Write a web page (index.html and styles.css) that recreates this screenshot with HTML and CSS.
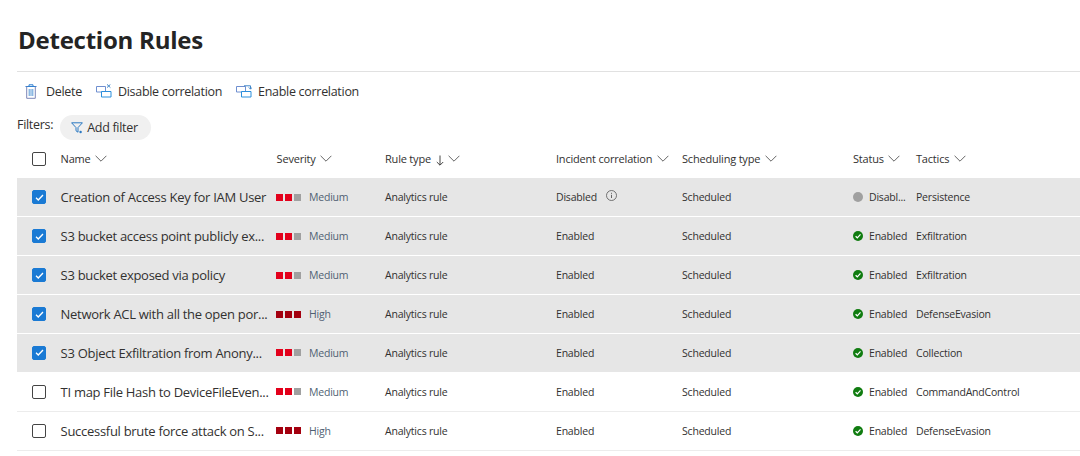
FILE: index.html
```html
<!DOCTYPE html>
<html lang="en">
<head>
  <meta charset="UTF-8" />
  <title>Detection Rules</title>
  <link rel="stylesheet" href="styles.css">
</head>
<body>
  <svg class="sprites" width="0" height="0" aria-hidden="true">
    <symbol id="chev" viewBox="0 0 12 7"><path d="M.6.8 6 6.2 11.4.8" fill="none" stroke="currentColor" stroke-width=".9"/></symbol>
    <symbol id="check" viewBox="0 0 10 8"><path d="M1 4.2 3.6 6.8 9 1.2" fill="none" stroke="#fff" stroke-width="1.6"/></symbol>
    <symbol id="ok" viewBox="0 0 10 10"><circle cx="5" cy="5" r="5" fill="#107c10"/><path d="M2.6 5.2 4.3 6.8 7.5 3.4" fill="none" stroke="#fff" stroke-width="1.2"/></symbol>
  </svg>

  <h1 class="title">Detection Rules</h1>

  <div class="toolbar">
    <span class="tool tool-delete">
      <svg class="icon-trash" viewBox="0 0 12 15"><path d="M.5 2.5h11M4 2.5V.8h4v1.7" fill="none" stroke="#2f7fd0"/><path d="M1.7 2.5v11.8h8.6V2.5" fill="none" stroke="#7c86b8"/><path d="M4.2 5v7M6 5v7M7.8 5v7" fill="none" stroke="#5a9ad6"/></svg>
      Delete
    </span>
    <span class="tool">
      <svg class="icon-corr" viewBox="0 0 16 14"><path d="M.5 2.5h9v5.5h-9z" fill="#fff" stroke="#6f8fd0"/><path d="M5.5 7.5h9.5v5.5H5.5z" fill="#fff" stroke="#2b8fdc"/><path d="M11 .4l3.4 3.2M14.4.4 11 3.6" stroke="#2b79c2" stroke-width=".9"/></svg>
      Disable correlation
    </span>
    <span class="tool">
      <svg class="icon-corr" viewBox="0 0 16 14"><path d="M.5 2.5h9v5.5h-9z" fill="#fff" stroke="#6f8fd0"/><path d="M5.5 7.5h9.5v5.5H5.5z" fill="#fff" stroke="#2b8fdc"/><path d="M8 1.8h6.5v3M12.8 3.4l1.7 1.8 1.5-1.8" fill="none" stroke="#2b79c2" stroke-width=".9"/></svg>
      Enable correlation
    </span>
  </div>

  <div class="filters">
    <span class="filters-label">Filters:</span>
    <span class="pill">
      <svg class="icon-filter" viewBox="0 0 12 12"><path d="M.6.8h10.8L7 5.6v4.6L5 8.8V5.6z" fill="none" stroke="#2b79c2"/><circle cx="9.6" cy="10" r="1.2" fill="#2b79c2"/></svg>
      Add filter
    </span>
  </div>

  <table class="rules">
    <colgroup>
      <col class="c-check"><col class="c-name"><col class="c-sev"><col class="c-type">
      <col class="c-corr"><col class="c-sched"><col class="c-status"><col class="c-tactics">
    </colgroup>
    <thead>
      <tr>
        <th><span class="box"></span></th>
        <th class="name">Name <svg class="chev"><use href="#chev"/></svg></th>
        <th class="sev-head">Severity <svg class="chev"><use href="#chev"/></svg></th>
        <th>Rule type <span class="sort-arrow"><svg viewBox="0 0 8 11" width="8" height="11"><path d="M4 .5v9.5M.8 7 4 10.2 7.2 7" fill="none" stroke="currentColor" stroke-width=".9"/></svg></span> <svg class="chev"><use href="#chev"/></svg></th>
        <th>Incident correlation <svg class="chev"><use href="#chev"/></svg></th>
        <th>Scheduling type <svg class="chev"><use href="#chev"/></svg></th>
        <th>Status <svg class="chev"><use href="#chev"/></svg></th>
        <th>Tactics <svg class="chev"><use href="#chev"/></svg></th>
      </tr>
    </thead>
    <tbody>
      <tr class="selected">
        <td><span class="box checked"><svg viewBox="0 0 10 8"><use href="#check"/></svg></span></td>
        <td class="name">Creation of Access Key for IAM User</td>
        <td><span class="sev"><i class="sq med"></i><i class="sq med"></i><i class="sq off"></i><span class="sev-label">Medium</span></span></td>
        <td>Analytics rule</td>
        <td>Disabled <svg class="icon-info" viewBox="0 0 11 11"><circle cx="5.5" cy="5.5" r="5" fill="none" stroke="#555" stroke-width=".8"/><path d="M5.5 4.8v3.2M5.5 2.8v1" stroke="#555" stroke-width=".9"/></svg></td>
        <td>Scheduled</td>
        <td><span class="status"><i class="dot"></i><span class="status-label">Disabl...</span></span></td>
        <td>Persistence</td>
      </tr>
      <tr class="selected">
        <td><span class="box checked"><svg viewBox="0 0 10 8"><use href="#check"/></svg></span></td>
        <td class="name">S3 bucket access point publicly ex...</td>
        <td><span class="sev"><i class="sq med"></i><i class="sq med"></i><i class="sq off"></i><span class="sev-label">Medium</span></span></td>
        <td>Analytics rule</td>
        <td>Enabled</td>
        <td>Scheduled</td>
        <td><span class="status"><svg class="icon-ok"><use href="#ok"/></svg><span class="status-label">Enabled</span></span></td>
        <td>Exfiltration</td>
      </tr>
      <tr class="selected">
        <td><span class="box checked"><svg viewBox="0 0 10 8"><use href="#check"/></svg></span></td>
        <td class="name">S3 bucket exposed via policy</td>
        <td><span class="sev"><i class="sq med"></i><i class="sq med"></i><i class="sq off"></i><span class="sev-label">Medium</span></span></td>
        <td>Analytics rule</td>
        <td>Enabled</td>
        <td>Scheduled</td>
        <td><span class="status"><svg class="icon-ok"><use href="#ok"/></svg><span class="status-label">Enabled</span></span></td>
        <td>Exfiltration</td>
      </tr>
      <tr class="selected">
        <td><span class="box checked"><svg viewBox="0 0 10 8"><use href="#check"/></svg></span></td>
        <td class="name">Network ACL with all the open por...</td>
        <td><span class="sev"><i class="sq high"></i><i class="sq high"></i><i class="sq high"></i><span class="sev-label">High</span></span></td>
        <td>Analytics rule</td>
        <td>Enabled</td>
        <td>Scheduled</td>
        <td><span class="status"><svg class="icon-ok"><use href="#ok"/></svg><span class="status-label">Enabled</span></span></td>
        <td>DefenseEvasion</td>
      </tr>
      <tr class="selected">
        <td><span class="box checked"><svg viewBox="0 0 10 8"><use href="#check"/></svg></span></td>
        <td class="name">S3 Object Exfiltration from Anony...</td>
        <td><span class="sev"><i class="sq med"></i><i class="sq med"></i><i class="sq off"></i><span class="sev-label">Medium</span></span></td>
        <td>Analytics rule</td>
        <td>Enabled</td>
        <td>Scheduled</td>
        <td><span class="status"><svg class="icon-ok"><use href="#ok"/></svg><span class="status-label">Enabled</span></span></td>
        <td>Collection</td>
      </tr>
      <tr>
        <td><span class="box"></span></td>
        <td class="name">TI map File Hash to DeviceFileEven...</td>
        <td><span class="sev"><i class="sq med"></i><i class="sq med"></i><i class="sq off"></i><span class="sev-label">Medium</span></span></td>
        <td>Analytics rule</td>
        <td>Enabled</td>
        <td>Scheduled</td>
        <td><span class="status"><svg class="icon-ok"><use href="#ok"/></svg><span class="status-label">Enabled</span></span></td>
        <td>CommandAndControl</td>
      </tr>
      <tr>
        <td><span class="box"></span></td>
        <td class="name">Successful brute force attack on S...</td>
        <td><span class="sev"><i class="sq high"></i><i class="sq high"></i><i class="sq high"></i><span class="sev-label">High</span></span></td>
        <td>Analytics rule</td>
        <td>Enabled</td>
        <td>Scheduled</td>
        <td><span class="status"><svg class="icon-ok"><use href="#ok"/></svg><span class="status-label">Enabled</span></span></td>
        <td>DefenseEvasion</td>
      </tr>
    </tbody>
  </table>
</body>
</html>
```

FILE: styles.css
```css
body {
  margin: 0;
  padding: 0 0 0 17px;
  height: 456px;
  overflow: hidden;
  background: #fff;
  color: #323130;
  font-family: "Open Sans", "Noto Sans", sans-serif;
}
.sprites { position: absolute; }

.title {
  margin: 0;
  padding: 21px 0 0 1px;
  height: 72px;
  box-sizing: border-box;
  font-size: 24px;
  line-height: 38px;
  font-weight: 700;
  color: #242424;
  letter-spacing: -0.24px;
  border-bottom: 1px solid #e1e1e1;
}

.toolbar {
  display: flex;
  align-items: center;
  height: 38px;
  padding-left: 8px;
  font-size: 12.5px;
  letter-spacing: -0.3px;
}
.tool { display: flex; align-items: center; gap: 6px; margin-right: 14px; }
.tool-delete { gap: 8px; }
.icon-trash { width: 12px; height: 15px; margin-right: 1px; }
.icon-corr { width: 16px; height: 14px; }

.filters {
  display: flex;
  align-items: flex-start;
  height: 29px;
  padding-top: 5px;
  box-sizing: border-box;
  gap: 7px;
  font-size: 12.5px;
  letter-spacing: -0.3px;
}
.filters-label { line-height: 20px; }
.pill {
  display: flex;
  align-items: center;
  gap: 4px;
  width: 91px;
  height: 25px;
  box-sizing: border-box;
  padding-left: 11px;
  border-radius: 13px;
  background: #f0f0f0;
}
.icon-filter { width: 12px; height: 12px; }

.rules {
  width: 1063px;
  table-layout: fixed;
  border-collapse: collapse;
  font-size: 10.5px;
  letter-spacing: -0.2px;
}
.c-check { width: 43px; }
.c-name { width: 216px; }
.c-sev { width: 109px; }
.c-type { width: 171px; }
.c-corr { width: 126px; }
.c-sched { width: 171px; }
.c-status { width: 63px; }
.c-tactics { width: 164px; }

.rules th {
  height: 39px;
  padding: 0;
  text-align: left;
  font-weight: 400;
  white-space: nowrap;
  font-size: 11px;
}
.rules td {
  height: 38.86px;
  box-sizing: border-box;
  padding: 0;
  white-space: nowrap;
  border-bottom: 1px solid #ececec;
}
.rules tr.selected td {
  background: #e6e6e6;
  border-bottom-color: #fff;
}
.rules td.name {
  font-size: 13px;
  letter-spacing: -0.29px;
  font-weight: 500;
  color: #323130;
}
.rules .name { padding-left: 0.6px; }
.rules .sev-head { padding-left: 0.6px; }

.chev { width: 12px; height: 7px; margin: 0 0 1px 2px; color: #555; }
.sort-arrow { display: inline-block; margin-left: 2px; vertical-align: middle; line-height: 0; }

.box {
  display: flex;
  align-items: center;
  justify-content: center;
  width: 14px;
  height: 14px;
  margin-left: 15px;
  box-sizing: border-box;
  border: 1px solid #444;
  border-radius: 2px;
  background: #fff;
}
.box.checked { background: #1a7ad4; border-color: #1a7ad4; }
.box svg { width: 9px; height: 7px; }

.sev { display: flex; align-items: center; }
.sq { width: 7px; height: 7px; margin-right: 2px; }
.sq.med { background: #e3001b; }
.sq.off { background: #a0a0a0; }
.sq.high { background: #a4000f; }
.sev-label { margin-left: 6px; color: #505f73; }

.icon-info { width: 11px; height: 11px; margin-left: 7px; vertical-align: 0; }

.status { display: flex; align-items: center; gap: 6px; }
.dot { width: 10px; height: 10px; border-radius: 50%; background: #a0a0a0; }
.icon-ok { width: 10px; height: 10px; }
```
